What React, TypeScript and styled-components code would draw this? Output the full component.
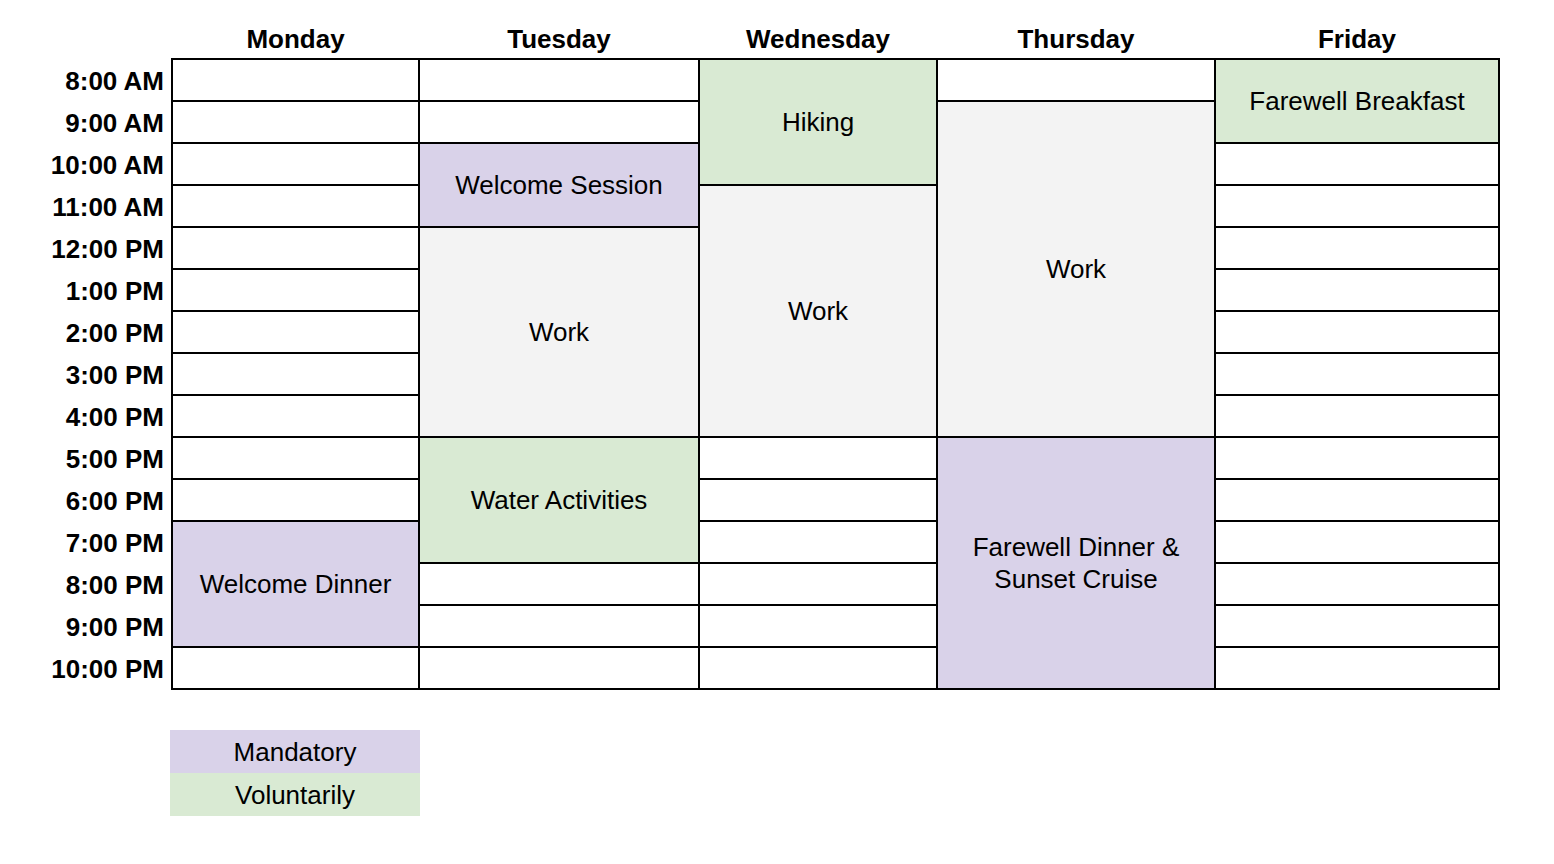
import React from "react";
import styled, { createGlobalStyle } from "styled-components";

const GlobalStyle = createGlobalStyle`
  html, body { margin: 0; padding: 0; background: #ffffff; }
  body { font-family: "Liberation Sans", Arial, sans-serif; color: #000; }
`;

type Kind = "mandatory" | "voluntary" | "work" | "empty";

const fills: Record<Kind, string> = {
  mandatory: "#d9d2e9",
  voluntary: "#d9ead3",
  work: "#f3f3f3",
  empty: "#ffffff",
};

interface Segment {
  span: number;
  kind: Kind;
  label?: React.ReactNode;
}

const hours = [
  "8:00 AM", "9:00 AM", "10:00 AM", "11:00 AM", "12:00 PM", "1:00 PM", "2:00 PM",
  "3:00 PM", "4:00 PM", "5:00 PM", "6:00 PM", "7:00 PM", "8:00 PM", "9:00 PM", "10:00 PM",
];

const empties = (n: number): Segment[] => Array.from({ length: n }, () => ({ span: 1, kind: "empty" as Kind }));

const days: { name: string; width: number; segments: Segment[] }[] = [
  {
    name: "Monday",
    width: 247,
    segments: [...empties(11), { span: 3, kind: "mandatory", label: "Welcome Dinner" }, ...empties(1)],
  },
  {
    name: "Tuesday",
    width: 280,
    segments: [
      ...empties(2),
      { span: 2, kind: "mandatory", label: "Welcome Session" },
      { span: 5, kind: "work", label: "Work" },
      { span: 3, kind: "voluntary", label: "Water Activities" },
      ...empties(3),
    ],
  },
  {
    name: "Wednesday",
    width: 238,
    segments: [
      { span: 3, kind: "voluntary", label: "Hiking" },
      { span: 6, kind: "work", label: "Work" },
      ...empties(6),
    ],
  },
  {
    name: "Thursday",
    width: 278,
    segments: [
      ...empties(1),
      { span: 8, kind: "work", label: "Work" },
      {
        span: 6,
        kind: "mandatory",
        label: (
          <>
            Farewell Dinner &amp;
            <br />
            Sunset Cruise
          </>
        ),
      },
    ],
  },
  {
    name: "Friday",
    width: 284,
    segments: [{ span: 2, kind: "voluntary", label: "Farewell Breakfast" }, ...empties(13)],
  },
];

const Page = styled.div`
  padding-top: 20px;
`;

const Table = styled.table`
  border-collapse: collapse;
  table-layout: fixed;
  width: 1500px;
`;

const DayHead = styled.th`
  height: 38px;
  padding: 0;
  font-size: 26px;
  font-weight: 700;
  text-align: center;
  vertical-align: middle;
  border: none;
`;

const TimeCell = styled.th`
  height: 38px;
  padding: 2px 7px 0 0;
  font-size: 26px;
  font-weight: 700;
  text-align: right;
  vertical-align: middle;
  white-space: nowrap;
  border: none;
`;

const SlotCell = styled.td<{ $kind: Kind }>`
  height: 38px;
  padding: 1px 4px 1px;
  border: 2px solid #000;
  background: ${(p) => fills[p.$kind]};
  font-size: 26px;
  line-height: 32px;
  text-align: center;
  vertical-align: middle;
`;

const Legend = styled.div`
  margin: 40px 0 0 170px;
  width: 250px;
  display: flex;
  flex-direction: column;
`;

const LegendItem = styled.div<{ $kind: Kind }>`
  height: 43px;
  display: flex;
  align-items: center;
  justify-content: center;
  padding-top: 2px;
  box-sizing: border-box;
  background: ${(p) => fills[p.$kind]};
  font-size: 26px;
`;

export default function App() {
  const starts = days.map((d) => {
    const m = new Map<number, Segment>();
    let r = 0;
    d.segments.forEach((s) => {
      m.set(r, s);
      r += s.span;
    });
    return m;
  });

  return (
    <Page>
      <GlobalStyle />
      <Table>
        <colgroup>
          <col style={{ width: 172 }} />
          {days.map((d) => (
            <col key={d.name} style={{ width: d.width }} />
          ))}
        </colgroup>
        <thead>
          <tr>
            <DayHead />
            {days.map((d) => (
              <DayHead key={d.name}>{d.name}</DayHead>
            ))}
          </tr>
        </thead>
        <tbody>
          {hours.map((h, r) => (
            <tr key={h}>
              <TimeCell>{h}</TimeCell>
              {days.map((d, di) => {
                const s = starts[di].get(r);
                if (!s) return null;
                return (
                  <SlotCell key={d.name} rowSpan={s.span} $kind={s.kind}>
                    {s.label}
                  </SlotCell>
                );
              })}
            </tr>
          ))}
        </tbody>
      </Table>
      <Legend>
        <LegendItem $kind="mandatory">Mandatory</LegendItem>
        <LegendItem $kind="voluntary">Voluntarily</LegendItem>
      </Legend>
    </Page>
  );
}
